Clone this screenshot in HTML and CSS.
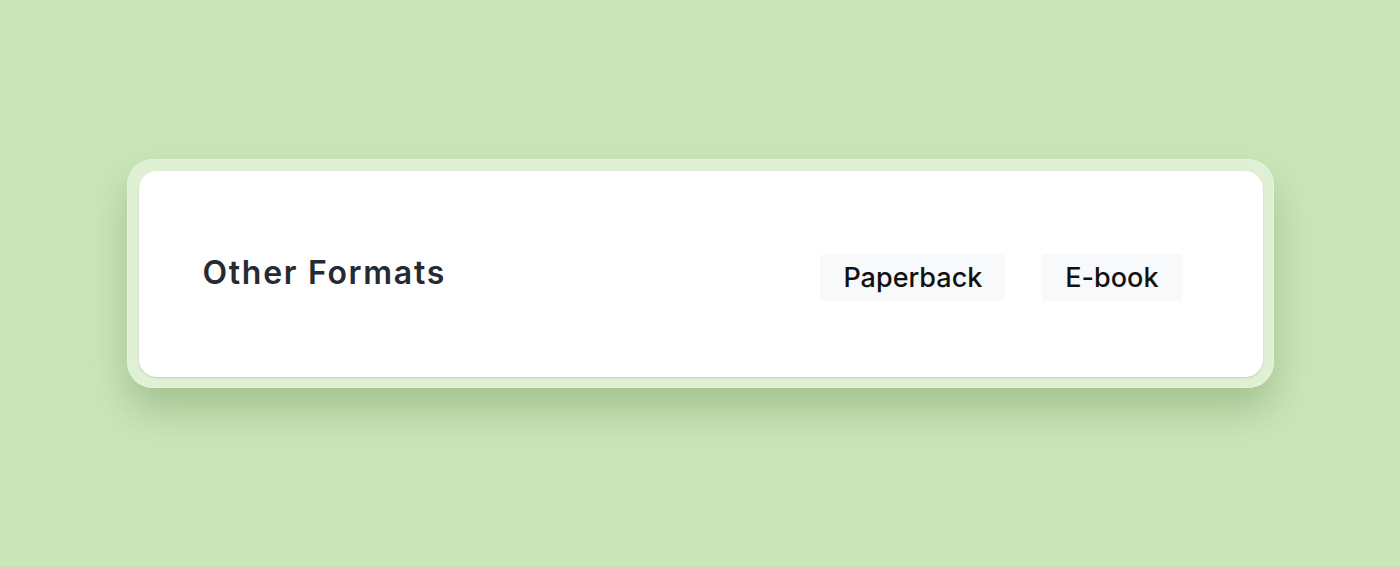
FILE: index.html
```html
<!DOCTYPE html>
<html>
<head>
    <title>Other Formats</title>
    <link rel="stylesheet" href="styles.css">
</head>
<body>
    <div class="stage">
        <div class="frame">
            <div class="card">
                <h2 class="title">Other Formats</h2>
                <div class="formats">
                    <button class="format">Paperback</button>
                    <button class="format">E-book</button>
                </div>
            </div>
        </div>
    </div>
</body>
</html>
```
FILE: styles.css
```css
body {
    margin: 0;
    background: #cbe7b9;
    font-family: Inter, "Noto Sans", sans-serif;
}
.stage {
    height: 567px;
    display: flex;
    align-items: flex-start;
    justify-content: center;
    padding-top: 159px;
    box-sizing: border-box;
}
.frame {
    width: 1147px;
    padding: 12px 11px 11px 12px;
    box-sizing: border-box;
    border-radius: 26px;
    background: rgba(228, 242, 219, 0.8);
    box-shadow: 0 22px 40px rgba(90, 120, 70, 0.35), 0 0 0 1px rgba(255,255,255,0.2) inset;
}
.card {
    height: 206px;
    background: #fff;
    border-radius: 18px;
    display: flex;
    align-items: center;
    justify-content: space-between;
    padding: 0 81px 0 64px;
    box-shadow: 0 1px 2px rgba(120, 150, 100, 0.3);
}
.title {
    margin: 0 0 4px;
    font-size: 32px;
    font-weight: 600;
    color: #252a33;
    letter-spacing: 1.7px;
}
.formats {
    display: flex;
    gap: 37px;
    margin-top: 7px;
}
.format {
    background: #f8f9fa;
    border: none;
    border-radius: 4px;
    height: 47px;
    padding: 0 23px;
    font-family: Inter, "Noto Sans", sans-serif;
    font-size: 27px;
    font-weight: 500;
    color: #111;
    cursor: pointer;
}
```
